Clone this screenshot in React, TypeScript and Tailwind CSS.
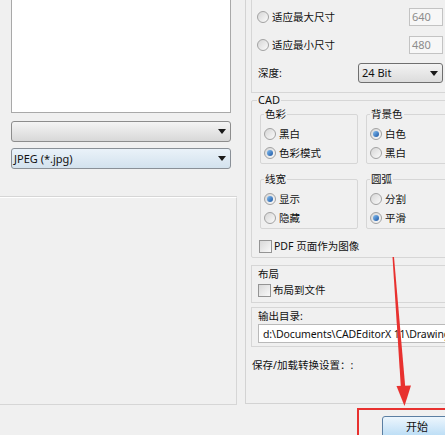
import React from "react";

function Radio({ checked = false }: { checked?: boolean }) {
  return (
    <span className="flex h-[12px] w-[12px] shrink-0 items-center justify-center rounded-full border border-[#a2a2a2] bg-gradient-to-br from-[#d6d6d6] to-[#fbfbfb]">
      {checked && (
        <span className="h-[6px] w-[6px] rounded-full bg-gradient-to-br from-[#86c0f2] to-[#1a56a3]" />
      )}
    </span>
  );
}

function RadioRow({ label, checked = false }: { label: string; checked?: boolean }) {
  return (
    <div className="flex h-[19px] items-center gap-[3px]">
      <Radio checked={checked} />
      <span>{label}</span>
    </div>
  );
}

function CheckRow({ label }: { label: string }) {
  return (
    <div className="flex h-[16px] items-center gap-[2px]">
      <span className="h-[13px] w-[13px] shrink-0 border border-[#949494] bg-gradient-to-br from-[#d9d9d9] to-[#f9f9f9]" />
      <span>{label}</span>
    </div>
  );
}

function Caret() {
  return (
    <svg width="8" height="5" viewBox="0 0 8 5" className="shrink-0">
      <path d="M0 0H8L4 5Z" fill="#1a1a1a" />
    </svg>
  );
}

function SubGroup({ title, items }: { title: string; items: { label: string; checked?: boolean }[] }) {
  return (
    <fieldset className="rounded-[2px] border border-[#d6d6d6] pb-[1px] pl-[3px]">
      <legend className="px-[1px] leading-[14px]">{title}</legend>
      <div className="pt-[3px]">
        {items.map((it) => (
          <RadioRow key={it.label} label={it.label} checked={it.checked} />
        ))}
      </div>
    </fieldset>
  );
}

export default function App() {
  return (
    <div className="relative flex h-[435px] w-[445px] flex-col overflow-hidden bg-[#f0f0f0] font-['Noto_Sans','Noto_Sans_CJK_SC',sans-serif] text-[10.5px] leading-[14px] text-[#111111]">
      <div className="flex h-[405px] shrink-0">
        {/* left column */}
        <div className="flex w-[237px] shrink-0 flex-col">
          <div className="h-[197px] shrink-0 border-b border-[#d6d6d6] pl-[11px]">
            <div className="h-[113px] w-[220px] border border-t-0 border-[#a9a9a9] bg-white" />
            <div className="mt-[8px] flex h-[21px] w-[220px] items-center justify-end rounded-[3px] border border-[#8d8d8d] bg-gradient-to-b from-[#f4f4f4] to-[#d8d8d8] pr-[4px]">
              <Caret />
            </div>
            <div className="mt-[6px] flex h-[21px] w-[220px] items-center justify-between rounded-[3px] border border-[#8a9097] bg-gradient-to-b from-[#eaf2f9] to-[#d3e2ee] pl-[2px] pr-[4px] text-[11px]">
              <span>JPEG (*.jpg)</span>
              <Caret />
            </div>
          </div>
          <div className="flex-1 border-r border-b border-t border-r-[#d6d6d6] border-b-[#d6d6d6] border-t-white" />
        </div>

        {/* right column */}
        <div className="ml-[8px] flex h-[404px] w-[208px] shrink-0 flex-col border-b border-l border-[#d3d3d3] pl-[5px]">
          {/* image size group */}
          <div className="h-[93px] shrink-0 border-b border-l border-[#d6d6d6] pl-[5px]">
            <div className="mt-[8px] flex h-[18px] items-center">
              <Radio />
              <span className="ml-[3px]">适应最大尺寸</span>
              <span className="ml-auto mr-[10px] flex h-[18px] w-[34px] items-center border border-[#c3c3c3] bg-[#f7f7f7] pl-[2px] text-[11px] text-[#8c8c8c]">
                640
              </span>
            </div>
            <div className="mt-[10px] flex h-[18px] items-center">
              <Radio />
              <span className="ml-[3px]">适应最小尺寸</span>
              <span className="ml-auto mr-[10px] flex h-[18px] w-[34px] items-center border border-[#c3c3c3] bg-[#f7f7f7] pl-[2px] text-[11px] text-[#8c8c8c]">
                480
              </span>
            </div>
            <div className="mt-[9px] flex h-[20px] items-center">
              <span className="ml-[1px]">深度:</span>
              <div className="ml-auto mr-[10px] flex h-[20px] w-[85px] items-center justify-between rounded-[3px] border border-[#6f6f6f] bg-gradient-to-b from-[#f3f3f3] to-[#dcdcdc] pl-[3px] pr-[4px] text-[11px]">
                <span>24 Bit</span>
                <Caret />
              </div>
            </div>
          </div>

          {/* CAD group */}
          <fieldset className="shrink-0 rounded-[2px] border border-[#d6d6d6] pb-[3px] pl-[5px]">
            <legend className="px-[1px] leading-[14px] text-[11px]">CAD</legend>
            <div className="ml-[3px] flex gap-[8px]">
              <div className="w-[98px] shrink-0">
                <SubGroup
                  title="色彩"
                  items={[
                    { label: "黑白" },
                    { label: "色彩模式", checked: true },
                  ]}
                />
              </div>
              <div className="flex-1">
                <SubGroup
                  title="背景色"
                  items={[
                    { label: "白色", checked: true },
                    { label: "黑白" },
                  ]}
                />
              </div>
            </div>
            <div className="ml-[3px] mt-[8px] flex gap-[8px]">
              <div className="w-[98px] shrink-0">
                <SubGroup
                  title="线宽"
                  items={[
                    { label: "显示", checked: true },
                    { label: "隐藏" },
                  ]}
                />
              </div>
              <div className="flex-1">
                <SubGroup
                  title="圆弧"
                  items={[
                    { label: "分割" },
                    { label: "平滑", checked: true },
                  ]}
                />
              </div>
            </div>
            <div className="ml-[2px] mt-[9px]">
              <CheckRow label="PDF 页面作为图像" />
            </div>
          </fieldset>

          {/* layout group */}
          <div className="mt-[7px] shrink-0 border border-r-0 border-[#d6d6d6] pb-[4px] pl-[6px] pt-[1px]">
            <div className="h-[14px]">布局</div>
            <div className="mt-[1px]">
              <CheckRow label="布局到文件" />
            </div>
          </div>

          {/* output dir group */}
          <div className="mt-[4px] shrink-0 border border-r-0 border-[#d6d6d6] pb-[3px] pl-[6px] pt-[1px]">
            <div className="h-[14px]">输出目录:</div>
            <div className="mt-[1px] flex h-[19px] items-center overflow-hidden whitespace-nowrap border border-[#b9b9b9] bg-white pl-[4px] text-[10.5px] tracking-[-0.1px]">
              d:\Documents\CADEditorX 11\Drawings
            </div>
          </div>

          <div className="ml-[1px] mt-[11px] h-[14px]">保存/加载转换设置：:</div>
        </div>
      </div>

      {/* bottom button row */}
      <div className="flex justify-end pt-[11px]">
        <button className="-mr-[7px] h-[22px] w-[70px] rounded-[3px] border border-[#5b7fa3] bg-gradient-to-b from-[#edf6fd] to-[#b9dcf5] text-[11px] text-[#111111]">
          开始
        </button>
      </div>

      {/* red annotation: arrow + rectangle */}
      <div className="absolute left-[357px] top-[408px] h-[40px] w-[100px] border-2 border-[#e8312f]" />
      <svg className="pointer-events-none absolute left-0 top-0" width="445" height="435" viewBox="0 0 445 435">
        <polygon points="392.5,257 394,257 405.5,390 401,390" fill="#e8312f" />
        <polygon points="396.5,386 411,385.5 404.5,406" fill="#e8312f" />
      </svg>
    </div>
  );
}
